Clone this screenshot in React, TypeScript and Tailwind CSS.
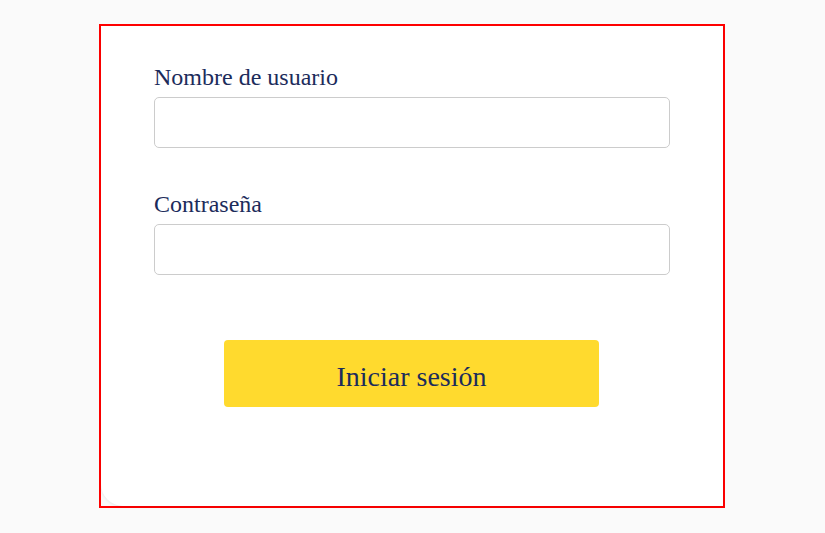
export default function App() {
    return (
        <div className="min-h-[533px] bg-[#fafafa] pt-[24px] font-['Liberation_Serif','Times_New_Roman',serif] text-[#1c2c5b]">
            <div className="ml-[99px] w-[626px] border-2 border-[#ff0000]">
                <form
                    className="flex flex-col rounded-bl-[22px] bg-white px-[53px] pt-[37px] pb-[99px] shadow-[0_1px_3px_rgba(0,0,0,0.08)]"
                    onSubmit={(e) => e.preventDefault()}
                >
                    {/* Usuario */}
                    <label htmlFor="user" className="mb-[6px] block text-[24px] leading-[28px]">
                        Nombre de usuario
                    </label>
                    <input
                        id="user"
                        type="text"
                        className="h-[51px] w-full rounded-[5px] border border-[#cccccc] bg-white px-3 text-[18px] outline-none"
                    />

                    {/* Contraseña */}
                    <label htmlFor="pass" className="mt-[42px] mb-[6px] block text-[24px] leading-[28px]">
                        Contraseña
                    </label>
                    <input
                        id="pass"
                        type="password"
                        className="h-[51px] w-full rounded-[5px] border border-[#cccccc] bg-white px-3 text-[18px] outline-none"
                    />

                    <button
                        type="submit"
                        className="mt-[65px] ml-[70px] h-[67px] w-[375px] self-start rounded-[4px] bg-[#ffda2e] pt-[6px] text-[28px] leading-none text-[#1c2c5b]"
                    >
                        Iniciar sesión
                    </button>
                </form>
            </div>
        </div>
    );
}
